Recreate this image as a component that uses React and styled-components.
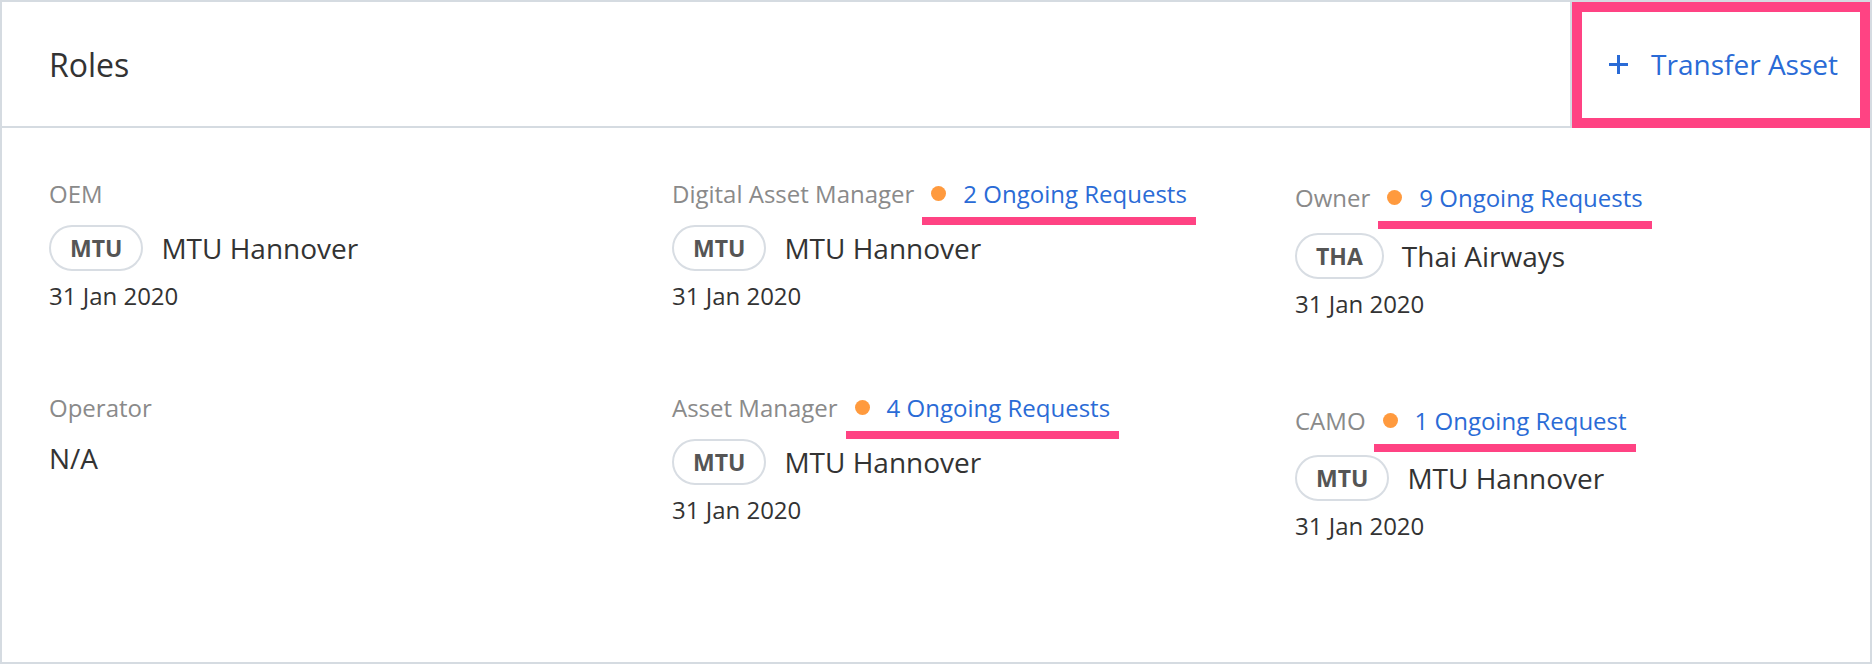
import React from 'react';
import styled, { createGlobalStyle } from 'styled-components';

const GlobalStyle = createGlobalStyle`
  html, body {
    margin: 0;
    padding: 0;
    background: #ffffff;
    font-family: "Open Sans", "Noto Sans", "Liberation Sans", sans-serif;
  }
  * { box-sizing: border-box; }
`;

const Card = styled.div`
  width: 1872px;
  height: 664px;
  border: 2px solid #d5dbe1;
  background: #ffffff;
`;

const Header = styled.div`
  height: 126px;
  border-bottom: 2px solid #d5dbe1;
  display: flex;
  justify-content: space-between;
  align-items: stretch;
`;

const Title = styled.h2`
  margin: 0;
  padding-left: 47px;
  align-self: center;
  font-size: 32px;
  font-weight: 400;
  color: #333333;
`;

const TransferButton = styled.button`
  position: relative;
  display: flex;
  align-items: center;
  gap: 22px;
  padding: 0 32px 0 36px;
  background: #ffffff;
  border: none;
  border-left: 2px solid #d5dbe1;
  font-family: inherit;
  font-size: 28px;
  color: #2a6bd6;
  cursor: pointer;

  &::after {
    content: '';
    position: absolute;
    inset: 0 0 -2px 0;
    border: 10px solid #ff4383;
    pointer-events: none;
  }
`;

const RolesGrid = styled.div`
  display: grid;
  grid-template-columns: repeat(3, 623px);
  row-gap: 71px;
  align-items: start;
  padding: 49px 0 0 47px;
`;

const Cell = styled.div`
  padding-top: ${(p) => p.$shift || 0}px;
`;

const LabelRow = styled.div`
  display: flex;
  align-items: center;
  height: 32px;
`;

const Label = styled.span`
  font-size: 24px;
  color: #8a8a8a;
`;

const RequestLink = styled.a`
  position: relative;
  display: inline-flex;
  align-items: center;
  gap: 17px;
  margin-left: 8px;
  padding: 0 9px;
  font-size: 24px;
  color: #2a6bd6;
  text-decoration: none;

  &::after {
    content: '';
    position: absolute;
    left: 0;
    right: 0;
    bottom: -15px;
    height: 8px;
    background: #ff4383;
  }
`;

const Dot = styled.span`
  width: 15px;
  height: 15px;
  border-radius: 50%;
  background: #ff9a3e;
`;

const EntityRow = styled.div`
  display: flex;
  align-items: center;
  gap: 18px;
  margin-top: ${(p) => 16 + (p.$extra || 0)}px;
`;

const Badge = styled.span`
  display: inline-flex;
  align-items: center;
  justify-content: center;
  height: 46px;
  padding: 0 19px;
  border: 2px solid #d8dde3;
  border-radius: 23px;
  font-size: 23px;
  font-weight: 700;
  color: #555555;
`;

const EntityName = styled.span`
  font-size: 28px;
  color: #333333;
`;

const DateText = styled.div`
  margin-top: 9px;
  font-size: 24px;
  line-height: 32px;
  color: #333333;
`;

const PlusIcon = () => (
  <svg width="21" height="21" viewBox="0 0 21 21">
    <path d="M10.5 1v19M1 10.5h19" stroke="#2a6bd6" strokeWidth="3" fill="none" />
  </svg>
);

const roles = [
  { label: 'OEM', code: 'MTU', name: 'MTU Hannover', date: '31 Jan 2020' },
  { label: 'Digital Asset Manager', requests: '2 Ongoing Requests', code: 'MTU', name: 'MTU Hannover', date: '31 Jan 2020' },
  { label: 'Owner', requests: '9 Ongoing Requests', code: 'THA', name: 'Thai Airways', date: '31 Jan 2020', shift: 4, extra: 4 },
  { label: 'Operator', name: 'N/A' },
  { label: 'Asset Manager', requests: '4 Ongoing Requests', code: 'MTU', name: 'MTU Hannover', date: '31 Jan 2020' },
  { label: 'CAMO', requests: '1 Ongoing Request', code: 'MTU', name: 'MTU Hannover', date: '31 Jan 2020', shift: 13, extra: 3 },
];

const RoleCell = ({ role }) => (
  <Cell $shift={role.shift}>
    <LabelRow>
      <Label>{role.label}</Label>
      {role.requests && (
        <RequestLink href="#">
          <Dot />
          {role.requests}
        </RequestLink>
      )}
    </LabelRow>
    <EntityRow $extra={role.extra}>
      {role.code && <Badge>{role.code}</Badge>}
      <EntityName>{role.name}</EntityName>
    </EntityRow>
    {role.date && <DateText>{role.date}</DateText>}
  </Cell>
);

const App = () => (
  <>
    <GlobalStyle />
    <Card>
      <Header>
        <Title>Roles</Title>
        <TransferButton>
          <PlusIcon />
          Transfer Asset
        </TransferButton>
      </Header>
      <RolesGrid>
        {roles.map((role) => (
          <RoleCell key={role.label} role={role} />
        ))}
      </RolesGrid>
    </Card>
  </>
);

export default App;
